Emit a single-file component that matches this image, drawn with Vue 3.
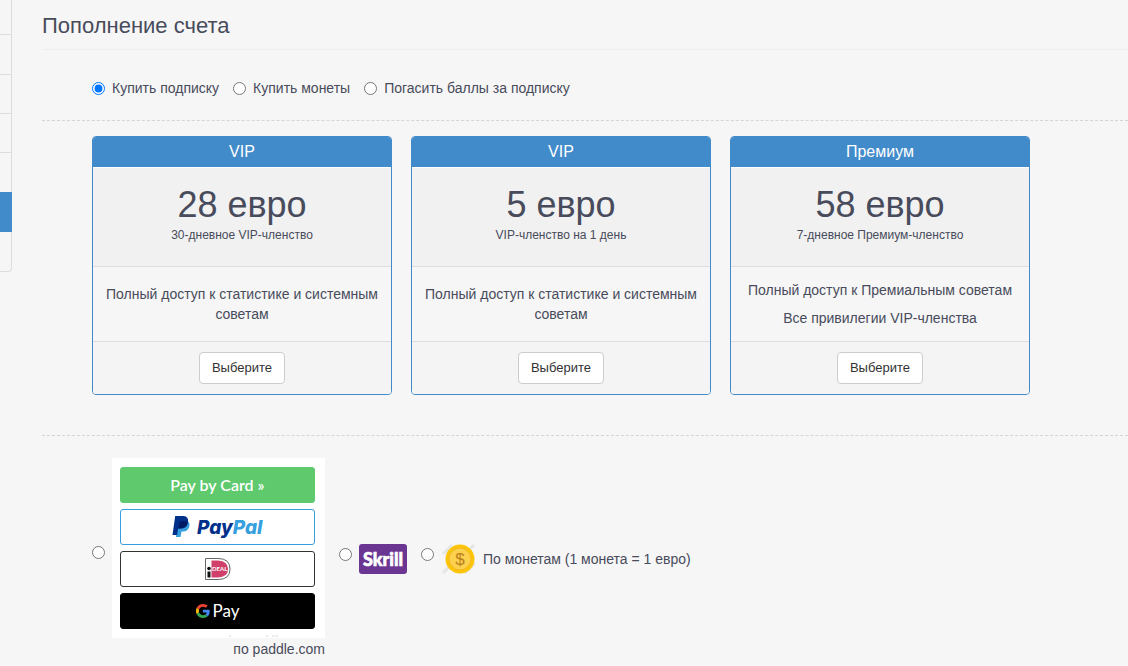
<script setup>
import { ref } from 'vue'

const purchase = ref('subscription')
const payment = ref('')

const purchaseOptions = [
  { value: 'subscription', label: 'Купить подписку' },
  { value: 'coins', label: 'Купить монеты' },
  { value: 'points', label: 'Погасить баллы за подписку' },
]

const plans = [
  {
    id: 'vip-month',
    title: 'VIP',
    price: '28 евро',
    term: '30-дневное VIP-членство',
    features: ['Полный доступ к статистике и системным советам'],
  },
  {
    id: 'vip-day',
    title: 'VIP',
    price: '5 евро',
    term: 'VIP-членство на 1 день',
    features: ['Полный доступ к статистике и системным советам'],
  },
  {
    id: 'premium-week',
    title: 'Премиум',
    price: '58 евро',
    term: '7-дневное Премиум-членство',
    features: ['Полный доступ к Премиальным советам', 'Все привилегии VIP-членства'],
  },
]
</script>

<template>
  <div class="page">
    <ul class="side">
      <li v-for="n in 7" :key="n" :class="{ active: n === 6 }"></li>
    </ul>

    <main class="content">
      <h1>Пополнение счета</h1>

      <div class="purchase">
        <label v-for="o in purchaseOptions" :key="o.value">
          <input v-model="purchase" type="radio" name="purchase" :value="o.value" />
          <span>{{ o.label }}</span>
        </label>
      </div>

      <section class="plans">
        <article v-for="p in plans" :key="p.id" class="plan">
          <h2>{{ p.title }}</h2>
          <div class="price">
            <strong>{{ p.price }}</strong>
            <small>{{ p.term }}</small>
          </div>
          <div class="features">
            <p v-for="f in p.features" :key="f">{{ f }}</p>
          </div>
          <div class="choose">
            <button type="button">Выберите</button>
          </div>
        </article>
      </section>

      <section class="payments">
        <label class="paddle">
          <input v-model="payment" type="radio" name="payment" value="paddle" />
          <span class="paddle-body">
            <span class="methods">
              <span class="method card">Pay by Card »</span>
              <span class="method paypal">
                <svg width="92" height="26" viewBox="0 0 92 26">
                  <path d="M5.500 7 H14.500 Q18 7.500 17.500 11.500 Q16.500 17.500 11 17.500 H9.500 L8.500 23 H4 Z" fill="#36a0df" />
                  <path d="M3.200 2 H11.500 Q17 2.500 16 8.500 Q14.800 14.500 8.500 14.500 H6.200 L5.100 21 H0.500 Z" fill="#00308a" />
                  <path d="M7.500 7.500 Q12 6.500 15.900 8 Q15 14.500 8.500 14.500 H6.300 Z" fill="#001c64" />
                  <text x="25" y="20"><tspan fill="#00308a">Pay</tspan><tspan fill="#36a0df">Pal</tspan></text>
                </svg>
              </span>
              <span class="method ideal">
                <svg width="28" height="24" viewBox="0 0 28 24">
                  <path d="M1.500 1.500 H14 Q26 1.500 26 12 Q26 22.500 14 22.500 H1.500 Z" fill="#fff" stroke="#666" stroke-width="1" />
                  <path d="M7.500 3.500 H14 Q24 4 24 12 Q24 20 14 20.500 H7.500 Z" fill="#d0406b" />
                  <circle cx="5" cy="11.500" r="1.800" fill="#111" />
                  <rect x="3.500" y="14.500" width="3" height="6" fill="#111" />
                  <text x="8" y="14">DEAL</text>
                </svg>
              </span>
              <span class="method gpay">
                <svg width="14" height="14" viewBox="0 0 48 48">
                  <path fill="#ea4335" d="M24 9.500c3.540 0 6.710 1.220 9.210 3.600l6.850-6.850C35.900 2.380 30.470 0 24 0 14.620 0 6.510 5.380 2.560 13.220l7.980 6.190C12.430 13.720 17.740 9.500 24 9.500z" />
                  <path fill="#4285f4" d="M46.980 24.550c0-1.570-.15-3.090-.38-4.550H24v9.020h12.940c-.58 2.960-2.260 5.480-4.780 7.180l7.730 6c4.510-4.180 7.090-10.360 7.090-17.650z" />
                  <path fill="#fbbc05" d="M10.530 28.590c-.48-1.450-.76-2.990-.76-4.590s.27-3.140.76-4.590l-7.980-6.190C.92 16.460 0 20.120 0 24c0 3.880.92 7.540 2.560 10.780l7.970-6.190z" />
                  <path fill="#34a853" d="M24 48c6.480 0 11.930-2.130 15.890-5.810l-7.730-6c-2.150 1.450-4.920 2.300-8.160 2.300-6.260 0-11.570-4.220-13.470-9.910l-7.980 6.190C6.510 42.620 14.620 48 24 48z" />
                </svg>
                <span>Pay</span>
              </span>
              <svg class="marks" width="195" height="2" viewBox="0 0 195 2">
                <path d="M109 1h2M146 1h2M152 1h2M155 1h3" stroke="#d4d4d4" stroke-width="1" />
              </svg>
            </span>
            <span class="caption">по paddle.com</span>
          </span>
        </label>

        <label class="wallet">
          <input v-model="payment" type="radio" name="payment" value="skrill" />
          <svg width="48" height="30" viewBox="0 0 48 30">
            <rect width="48" height="30" rx="3" fill="#6b3592" />
            <text class="skrill" x="24" y="22" text-anchor="middle">Skrill</text>
          </svg>
        </label>

        <label class="wallet">
          <input v-model="payment" type="radio" name="payment" value="coins" />
          <svg width="35" height="30" viewBox="0 0 35 30">
            <path d="M2 10 L11 1 M2 29 L8 23 M24 29 L34 19 M29 5 L33 1" stroke="#e6e6e6" stroke-width="3" />
            <circle cx="19" cy="15" r="14.500" fill="#fdc50a" />
            <circle cx="19" cy="15" r="11" fill="#fdd04e" stroke="#f4b71c" stroke-width="1" />
            <text class="dollar" x="19" y="21" text-anchor="middle">$</text>
          </svg>
          <span>По монетам (1 монета = 1 евро)</span>
        </label>
      </section>
    </main>
  </div>
</template>

<style>
body {
  background: #f6f6f6;
  overflow: hidden;
}
</style>

<style scoped>
* {
  box-sizing: border-box;
}

.page {
  display: flex;
  align-items: flex-start;
  gap: 30px;
  font: 14px/20px "Liberation Sans", Arial, sans-serif;
  color: #484b5b;
}

.side {
  flex: 0 0 12px;
  margin: 0;
  padding: 0;
  list-style: none;
  border: solid #ddd;
  border-width: 0 1px 1px 0;
  border-bottom-right-radius: 4px;
}

.side li {
  height: 39px;
  border-top: 1px solid #ddd;
}

.side li:first-child {
  height: 35px;
  border-top: 0;
  border-bottom: 1px solid #ddd;
}

.side li:nth-child(2) {
  border-top: 0;
}

.side li:nth-child(5) {
  height: 40px;
}

.side li.active {
  height: 40px;
  margin-right: -1px;
  border-color: #428bca;
  background: #428bca;
}

.side li:last-child {
  border-top: 0;
}

.content {
  flex: 1;
  min-width: 0;
}

h1 {
  margin: 0;
  padding: 12px 0 9px;
  border-bottom: 1px solid #eee;
  font-size: 22px;
  line-height: 28px;
  font-weight: 400;
}

input {
  flex: none;
  width: 13px;
  height: 13px;
  margin: 0;
}

.purchase {
  display: flex;
  gap: 14px;
  padding: 28px 50px 22px;
  border-bottom: 1px dashed #d5d5d5;
}

.purchase label {
  display: flex;
  align-items: center;
  gap: 7px;
}

.plans {
  display: grid;
  grid-template-columns: repeat(3, minmax(0, 300px));
  gap: 19px;
  padding: 15px 50px 40px;
  border-bottom: 1px dashed #d5d5d5;
}

.plan {
  display: flex;
  flex-direction: column;
  border: 1px solid #428bca;
  border-radius: 4px;
  overflow: hidden;
  text-align: center;
}

h2 {
  margin: 0;
  padding: 5px 0;
  background: #428bca;
  color: #fff;
  font-size: 16px;
  line-height: 20px;
  font-weight: 400;
}

.price {
  padding: 17px 0 21px;
  border-top: 1px solid #fff;
  border-bottom: 1px solid #ddd;
  background: #f1f1f1;
}

.price strong {
  display: block;
  font-size: 36px;
  line-height: 40px;
  font-weight: 400;
}

.price small {
  display: block;
  font-size: 12px;
  line-height: 20px;
}

.features {
  flex: 1;
  display: flex;
  flex-direction: column;
  justify-content: center;
  gap: 8px;
  min-height: 75px;
  padding: 0 8px;
  border-bottom: 1px solid #ddd;
}

.features p {
  margin: 0;
}

.choose {
  padding: 10px;
  background: #f4f4f4;
}

button {
  display: block;
  margin: 0 auto;
  padding: 6px 12px;
  border: 1px solid #ccc;
  border-radius: 4px;
  background: #fff;
  color: #333;
  font: 13px/18px "Liberation Sans", Arial, sans-serif;
}

.payments {
  display: flex;
  align-items: center;
  gap: 14px;
  padding: 22px 50px 0;
}

.payments label {
  display: flex;
  align-items: center;
  gap: 7px;
}

.paddle input {
  margin-bottom: 14px;
}

.wallet input {
  margin-bottom: 9px;
}

.paddle-body {
  display: block;
}

.methods {
  display: flex;
  flex-direction: column;
  gap: 6px;
  width: 213px;
  height: 180px;
  padding: 9px 10px 0 8px;
  background: #fff;
}

.method {
  display: flex;
  align-items: center;
  justify-content: center;
  flex: 0 0 36px;
  border: 1px solid;
  border-radius: 3px;
}

.card {
  border-color: #5ec96d;
  background: #5ec96d;
  color: #fff;
  font: 600 16px/20px Lato, sans-serif;
}

.paypal {
  border-color: #369fe0;
}

.paypal text {
  font: italic 800 19px Inter, sans-serif;
}

.ideal {
  border-color: #333;
}

.ideal text {
  font: 700 6px Lato, sans-serif;
  fill: #fff;
}

.gpay {
  gap: 3px;
  border-color: #000;
  background: #000;
  color: #fff;
  font: 17px/20px Lato, sans-serif;
}

.caption {
  display: block;
  line-height: 22px;
  text-align: right;
}

.marks {
  flex: none;
}

.skrill {
  font: 900 18px Lato, sans-serif;
  fill: #fff;
  stroke: #fff;
  stroke-width: 0.6px;
}

.dollar {
  font: 17px "Liberation Sans", Arial, sans-serif;
  fill: #b9811a;
}
</style>
